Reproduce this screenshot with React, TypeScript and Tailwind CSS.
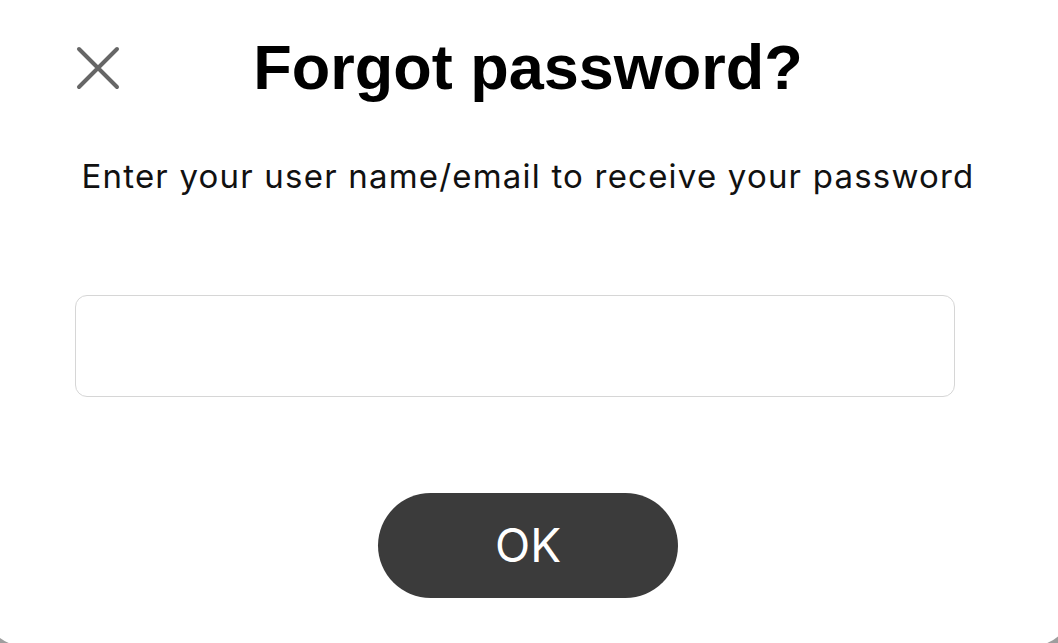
import React from "react"

const CloseIcon = () => (
  <svg width="44" height="44" viewBox="0 0 44 44" fill="none">
    <path d="M3 3 L41 41 M41 3 L3 41" stroke="#666666" strokeWidth="4" strokeLinecap="round" />
  </svg>
)

const App = () => {
  return (
    <div className="w-full h-[643px] overflow-hidden bg-[#9e9e9e]">
      <div className="w-[1088px] h-[646px] -ml-[16px] bg-white rounded-b-[40px] flex flex-col">
        <div className="grid grid-cols-[1fr_auto_1fr] items-center pt-[36px]">
          <div className="pl-[92px] flex items-center">
            <CloseIcon />
          </div>
          <h1 className="text-[63px] leading-none font-bold text-black font-['Liberation_Sans',Arial,sans-serif]">
            Forgot password?
          </h1>
          <div />
        </div>
        <p className="mt-[59px] text-center text-[33px] leading-[37px] text-[#111] font-['Inter',sans-serif] tracking-[1.2px]">
          Enter your user name/email to receive your password
        </p>
        <input
          type="text"
          className="mt-[100px] ml-[91px] w-[880px] h-[102px] rounded-[12px] border border-[#d6d6d6] bg-white outline-none px-4 text-[28px] font-['Inter',sans-serif]"
        />
        <div className="mt-[96px] flex justify-center">
          <button className="w-[300px] h-[105px] rounded-full bg-[#3b3b3b] text-white text-[46px] font-['Inter',sans-serif]">
            OK
          </button>
        </div>
      </div>
    </div>
  )
}

export default App
